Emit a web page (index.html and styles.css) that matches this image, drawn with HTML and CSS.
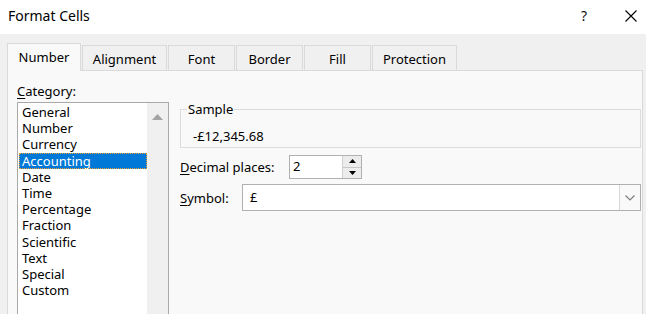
FILE: index.html
```html
<!DOCTYPE html>
<html>
<head>
<meta charset="utf-8">
<link rel="stylesheet" href="styles.css">
</head>
<body>
<div class="window">
  <div class="titlebar">
    <div class="title">Format Cells</div>
    <div class="help">?</div>
    <div class="close">
      <svg width="12" height="12" viewBox="0 0 12 12"><path d="M0.5 0.5 L11.5 11.5 M11.5 0.5 L0.5 11.5" stroke="#000" stroke-width="1.1" fill="none"/></svg>
    </div>
  </div>
  <div class="dialog">
    <div class="tabs">
      <div class="tab active">Number</div>
      <div class="tab w85">Alignment</div>
      <div class="tab">Font</div>
      <div class="tab">Border</div>
      <div class="tab">Fill</div>
      <div class="tab w85">Protection</div>
    </div>
    <div class="panel">
      <div class="left">
        <div class="label"><u>C</u>ategory:</div>
        <div class="listbox">
          <ul class="items">
            <li>General</li>
            <li>Number</li>
            <li>Currency</li>
            <li class="selected">Accounting</li>
            <li>Date</li>
            <li>Time</li>
            <li>Percentage</li>
            <li>Fraction</li>
            <li>Scientific</li>
            <li>Text</li>
            <li>Special</li>
            <li>Custom</li>
          </ul>
          <div class="scrollbar">
            <svg class="up" width="11" height="6" viewBox="0 0 11 6"><path d="M5.5 0 L11 6 L0 6 Z" fill="#a3a3a3"/></svg>
          </div>
        </div>
      </div>
      <div class="right">
        <fieldset class="sample">
          <legend>Sample</legend>
          <div class="sample-value">-£12,345.68</div>
        </fieldset>
        <div class="row decimal">
          <div class="label"><u>D</u>ecimal places:</div>
          <div class="spinner">
            <div class="spin-value">2</div>
            <div class="spin-buttons">
              <div class="spin-btn"><svg width="7" height="4" viewBox="0 0 7 4"><path d="M3.5 0 L7 4 L0 4 Z" fill="#000"/></svg></div>
              <div class="spin-btn"><svg width="7" height="4" viewBox="0 0 7 4"><path d="M0 0 L7 0 L3.5 4 Z" fill="#000"/></svg></div>
            </div>
          </div>
        </div>
        <div class="row symbol">
          <div class="label"><u>S</u>ymbol:</div>
          <div class="combo">
            <div class="combo-value">£</div>
            <div class="combo-btn"><svg width="10" height="6" viewBox="0 0 10 6"><path d="M0.5 0.5 L5 5 L9.5 0.5" stroke="#7a7a7a" stroke-width="1.1" fill="none"/></svg></div>
          </div>
        </div>
      </div>
    </div>
  </div>
</div>
</body>
</html>
```
FILE: styles.css
```css
* { box-sizing: border-box; }
html, body {
  margin: 0;
  padding: 0;
  background: #ffffff;
  overflow: hidden;
}
body {
  font-family: "Noto Sans", "Open Sans", sans-serif;
  font-size: 13px;
  color: #000;
  width: 646px;
  height: 314px;
}
.window {
  display: flex;
  flex-direction: column;
  height: 314px;
}
.titlebar {
  height: 34px;
  display: flex;
  align-items: center;
  background: #fff;
  flex: none;
}
.title {
  font-size: 14px;
  padding-left: 8px;
  flex: 1;
  margin-top: -4px;
}
.help {
  font-size: 14px;
  width: 20px;
  margin-right: 31px;
  text-align: center;
  margin-top: -4px;
  color: #111;
}
.close {
  width: 12px;
  height: 12px;
  margin-right: 9px;
  margin-top: -3px;
  display: flex;
}
.dialog {
  flex: 1;
  background: #f0f0f0;
  padding: 9px 3px 0 7px;
  display: flex;
  flex-direction: column;
  min-height: 0;
}
.tabs {
  display: flex;
  align-items: flex-end;
  height: 27px;
  flex: none;
  position: relative;
  z-index: 1;
}
.tab {
  height: 25px;
  width: 67px;
  border: 1px solid #dadada;
  border-bottom: none;
  background: #f0f0f0;
  display: flex;
  align-items: center;
  justify-content: center;
  margin-right: 1px;
  padding-top: 1px;
}
.tab.w85 { width: 85px; }
.tab.active {
  height: 28px;
  width: 74px;
  background: #f9f9f9;
  margin-bottom: -1px;
  padding-top: 0;
  padding-bottom: 2px;
}
.panel {
  flex: 1;
  background: #f9f9f9;
  border: 1px solid #dadada;
  border-bottom: none;
  display: grid;
  grid-template-columns: 152px 1fr;
  column-gap: 11px;
  padding: 12px 1px 0 9px;
  min-height: 0;
}
.left {
  display: flex;
  flex-direction: column;
  min-height: 0;
}
.label {
  line-height: 16px;
  white-space: nowrap;
}
.label u { text-decoration-thickness: 1px; text-underline-offset: 2px; }
.listbox {
  margin-top: 3px;
  flex: 1;
  border: 1px solid #a9a9a9;
  border-bottom: none;
  background: #fff;
  display: flex;
  min-height: 0;
}
.items {
  list-style: none;
  margin: 0;
  padding: 1px 0 0 1px;
  flex: 1;
}
.items li {
  line-height: 16.2px;
  height: 16.2px;
  padding-left: 3px;
  white-space: nowrap;
}
.items li.selected {
  background: #0078d7;
  color: #fff;
  outline: 1px dotted #f0a030;
  outline-offset: -1px;
}
.scrollbar {
  width: 21px;
  background: #f0f0f0;
  display: flex;
  justify-content: center;
  padding-top: 11px;
}
.right {
  display: flex;
  flex-direction: column;
  padding-top: 18px;
}
.sample {
  margin: 0;
  padding: 11px 0 3px 0;
  border: 1px solid #dcdcdc;
  min-width: 0;
}
.sample legend {
  padding: 0 1px;
  margin-left: 6px;
  line-height: 16px;
}
.sample-value {
  line-height: 16px;
  padding-left: 12px;
}
.row {
  display: flex;
  align-items: center;
}
.decimal {
  margin-top: 7px;
}
.decimal .label { width: 109px; }
.spinner {
  width: 73px;
  height: 24px;
  border: 1px solid #b0b0b0;
  background: #fff;
  display: flex;
}
.spin-value {
  flex: 1;
  padding-left: 3px;
  line-height: 21px;
}
.spin-buttons {
  width: 19px;
  display: flex;
  flex-direction: column;
  border-left: 1px solid #d0d0d0;
  background: #ececec;
}
.spin-btn {
  flex: 1;
  display: flex;
  align-items: center;
  justify-content: center;
}
.spin-btn + .spin-btn { border-top: 1px solid #c8c8c8; }
.symbol {
  margin-top: 5px;
}
.symbol .label { width: 62px; }
.combo {
  flex: 1;
  height: 27px;
  border: 1px solid #b0b0b0;
  background: #fff;
  display: flex;
}
.combo-value {
  flex: 1;
  padding-left: 7px;
  line-height: 24px;
}
.combo-btn {
  width: 21px;
  border-left: 1px solid #d8d8d8;
  background: #f9f9f9;
  display: flex;
  align-items: center;
  justify-content: center;
}
```
